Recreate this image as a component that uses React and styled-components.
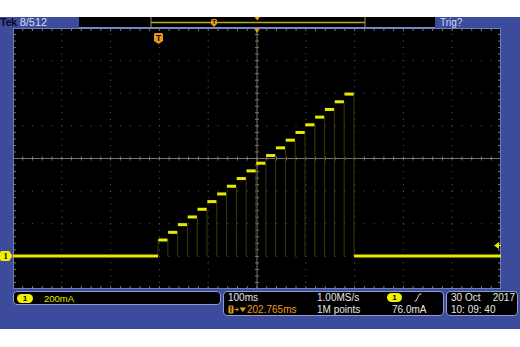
import styled, { createGlobalStyle } from "styled-components";

const GlobalStyle = createGlobalStyle`
  body {
    margin: 0;
    background: #ffffff;
    font-family: "Liberation Sans", Arial, sans-serif;
  }
`;

const BLUE = "#3c4b9c";
const YELLOW = "#e8e800";
const ORANGE = "#eb9a1e";

const Page = styled.div`
  width: 520px;
  height: 347px;
  padding-top: 17px;
  box-sizing: border-box;
`;

const Scope = styled.div`
  height: 312px;
  background: ${BLUE};
  display: flex;
  flex-direction: column;
`;

const TopBar = styled.div`
  display: flex;
  height: 11px;
  align-items: stretch;
`;

const TekLabel = styled.div`
  width: 79px;
  display: flex;
  align-items: center;
  gap: 3px;
  font-size: 11px;
  line-height: 11px;
  color: #d6dcf4;
`;

const TekBrand = styled.span`
  font-weight: bold;
  color: #0c0c24;
  letter-spacing: -0.5px;
`;

const RecordView = styled.div`
  flex: 1;
  background: #000;
  border-bottom: 1px solid #7f8cc2;
  box-sizing: border-box;
  display: flex;
`;

const TrigLabel = styled.div`
  width: 85px;
  padding-left: 5px;
  box-sizing: border-box;
  font-size: 10px;
  line-height: 11px;
  color: #d2d8f2;
`;

const Middle = styled.div`
  display: flex;
  height: 261px;
`;

const SideStrip = styled.div`
  width: ${(p) => p.$w}px;
  position: relative;
`;

const ChannelTag = styled.div`
  position: absolute;
  left: 0;
  top: ${(p) => p.$top}px;
  width: 13px;
  height: 10px;
  display: flex;
`;

const StatusRow = styled.div`
  display: flex;
  gap: 2px;
  padding: 2px 2px 0 13px;
  align-items: flex-start;
`;

const Panel = styled.div`
  background: #000;
  border: 1px solid #8d9bd0;
  border-radius: 4px;
  box-sizing: border-box;
  width: ${(p) => p.$w}px;
  height: ${(p) => p.$h}px;
  font-size: 10px;
  color: #e6e6e6;
`;

const ProbeRow = styled.div`
  display: flex;
  align-items: center;
  height: 100%;
  padding-left: 3px;
  gap: 11px;
  color: ${YELLOW};
  font-size: 9.5px;
`;

const Pill = styled.span`
  display: inline-flex;
  align-items: center;
  justify-content: center;
  width: ${(p) => p.$w || 15}px;
  height: 9px;
  border-radius: 5px;
  background: #f2f200;
  color: #000;
  font-size: 8px;
  font-weight: bold;
  line-height: 9px;
`;

const TimeGrid = styled.div`
  display: grid;
  grid-template-columns: 89px 70px 1fr;
  grid-template-rows: 11.5px 11.5px;
  align-items: center;
  padding-left: 4px;
  line-height: 11px;
`;

const Cell = styled.div`
  display: flex;
  align-items: center;
  gap: ${(p) => p.$gap || 0}px;
  padding-left: ${(p) => p.$pl || 0}px;
  color: ${(p) => p.$color || "#e6e6e6"};
  white-space: nowrap;
`;

const DateGrid = styled.div`
  display: flex;
  flex-direction: column;
  padding: 0 2px 0 4px;
  line-height: 11.5px;
`;

const DateLine = styled.div`
  display: flex;
  justify-content: space-between;
`;

function TMarker({ x, y, w = 9, h = 11 }) {
  return (
    <g transform={`translate(${x},${y})`}>
      <path
        d={`M1.5 0 H${w - 1.5} Q${w} 0 ${w} 1.5 V${h - 3} L${w / 2} ${h} L0 ${h - 3} V1.5 Q0 0 1.5 0 Z`}
        fill={ORANGE}
      />
      <text
        x={w / 2}
        y={h - 3}
        textAnchor="middle"
        fontSize={h - 2}
        fontWeight="bold"
        fontFamily="Liberation Sans, Arial, sans-serif"
        fill="#1a0f00"
      >
        T
      </text>
    </g>
  );
}

function RecordBar() {
  return (
    <svg width="356" height="10" style={{ display: "block" }}>
      <line x1="72" y1="0" x2="72" y2="10" stroke="#9a9070" strokeWidth="1" />
      <line x1="286" y1="0" x2="286" y2="10" stroke="#9a9070" strokeWidth="1" />
      <line x1="72" y1="5.5" x2="286" y2="5.5" stroke="#b4ac10" strokeWidth="1.6" />
      <TMarker x={132} y={2} w={6} h={8} />
      <path d="M175.5 0 H181 L178.25 3.5 Z" fill={ORANGE} />
    </svg>
  );
}

function Graticule() {
  const W = 488;
  const H = 261;
  const dx = W / 10;
  const dy = H / 8;
  const cx = W / 2;
  const cy = H / 2;
  const grid = [];

  for (let k = 1; k < 10; k++) {
    if (k === 5) continue;
    grid.push(
      <line
        key={`v${k}`}
        x1={k * dx}
        y1={0}
        x2={k * dx}
        y2={H}
        stroke="#5c5c5c"
        strokeWidth="1"
        strokeDasharray={`1 ${dy / 5 - 1}`}
        strokeDashoffset="0.5"
      />
    );
  }
  for (let k = 1; k < 8; k++) {
    if (k === 4) continue;
    grid.push(
      <line
        key={`h${k}`}
        x1={0}
        y1={k * dy}
        x2={W}
        y2={k * dy}
        stroke="#5c5c5c"
        strokeWidth="1"
        strokeDasharray={`1 ${dx / 5 - 1}`}
        strokeDashoffset="0.5"
      />
    );
  }

  const ticks = [];
  for (let j = 1; j < 50; j++) {
    const x = (j * dx) / 5;
    ticks.push(<line key={`tc${j}`} x1={x} y1={cy - 2} x2={x} y2={cy + 2} />);
    ticks.push(<line key={`tt${j}`} x1={x} y1={1} x2={x} y2={3} />);
    ticks.push(<line key={`tb${j}`} x1={x} y1={H - 3} x2={x} y2={H - 1} />);
  }
  for (let j = 1; j < 40; j++) {
    const y = (j * dy) / 5;
    ticks.push(<line key={`mc${j}`} x1={cx - 2} y1={y} x2={cx + 2} y2={y} />);
    ticks.push(<line key={`ml${j}`} x1={1} y1={y} x2={3} y2={y} />);
    ticks.push(<line key={`mr${j}`} x1={W - 3} y1={y} x2={W - 1} y2={y} />);
  }

  const base = 228;
  const steps = Array.from({ length: 20 }, (_, i) => ({ x: 145 + i * 9.8, y: 212 - i * 7.68 }));

  return (
    <svg width={W} height={H} style={{ display: "block", background: "#000" }}>
      {grid}
      <line x1={0} y1={cy} x2={W} y2={cy} stroke="#7a7564" strokeWidth="1" />
      <line x1={cx} y1={0} x2={cx} y2={H} stroke="#7a7564" strokeWidth="1" />
      <g stroke="#7e786a" strokeWidth="1">{ticks}</g>
      <rect x="0.5" y="0.5" width={W - 1} height={H - 1} fill="none" stroke="#6f7db8" strokeWidth="1" />

      {steps.map((s, i) => (
        <line
          key={`d${i}`}
          x1={s.x + 9.8}
          y1={s.y + 1}
          x2={s.x + 9.8}
          y2={base}
          stroke="#38380c"
          strokeWidth="1"
        />
      ))}
      <line x1={145} y1={212} x2={145} y2={base} stroke="#38380c" strokeWidth="1" />

      <rect x="0" y={base - 1.5} width="145" height="3" fill={YELLOW} />
      <rect x="341" y={base - 1.5} width={W - 341} height="3" fill={YELLOW} />
      {steps.map((s, i) => (
        <rect key={`s${i}`} x={s.x + 0.3} y={s.y - 1.5} width="9.2" height="3" fill={YELLOW} />
      ))}

      <TMarker x={141} y={5} w={9} h={11} />
      <path d={`M${cx - 3} 0.5 H${cx + 3} L${cx} 5 Z`} fill={ORANGE} />
      <path d="M481 217.5 L486 214 V221 Z M485 217 H488 V218 H485 Z" fill={YELLOW} />
    </svg>
  );
}

function SlopeIcon() {
  return (
    <svg width="8" height="9" style={{ display: "block" }}>
      <path d="M0.5 8 H2 L5.5 1 H7.5" fill="none" stroke="#e6e6e6" strokeWidth="0.9" />
    </svg>
  );
}

function ChannelMarker() {
  return (
    <svg width="13" height="10" style={{ display: "block" }}>
      <path d="M2 0 H9 L12.6 5 L9 10 H2 Q0 10 0 8 V2 Q0 0 2 0 Z" fill="#f0f000" />
      <text
        x="5.5"
        y="8.3"
        textAnchor="middle"
        fontSize="8.5"
        fontWeight="bold"
        fontFamily="Liberation Serif, serif"
        fill="#000"
      >
        1
      </text>
    </svg>
  );
}

function TimeRefIcon() {
  return (
    <svg width="19" height="9" style={{ display: "block" }}>
      <rect x="0.5" y="0.5" width="5" height="8" rx="1.2" fill={ORANGE} />
      <path d="M1.8 2 H4.2 M3 2 V7.5" stroke="#1a0f00" strokeWidth="1.1" />
      <path d="M6.5 4.5 H10 M8.6 3 L10.3 4.5 L8.6 6" stroke={ORANGE} strokeWidth="1" fill="none" />
      <path d="M11.5 2.5 H18 L14.75 7 Z" fill={ORANGE} />
    </svg>
  );
}

export default function App() {
  return (
    <Page>
      <GlobalStyle />
      <Scope>
        <TopBar>
          <TekLabel>
            <TekBrand>Tek</TekBrand>
            <span>8/512</span>
          </TekLabel>
          <RecordView>
            <RecordBar />
          </RecordView>
          <TrigLabel>Trig?</TrigLabel>
        </TopBar>

        <Middle>
          <SideStrip $w={13}>
            <ChannelTag $top={223}>
              <ChannelMarker />
            </ChannelTag>
          </SideStrip>
          <Graticule />
          <SideStrip $w={19} />
        </Middle>

        <StatusRow>
          <Panel $w={208} $h={14}>
            <ProbeRow>
              <Pill $w={16}>1</Pill>
              <span>200mA</span>
            </ProbeRow>
          </Panel>
          <Panel $w={221} $h={25}>
            <TimeGrid>
              <Cell>100ms</Cell>
              <Cell>1.00MS/s</Cell>
              <Cell $gap={12}>
                <Pill>1</Pill>
                <SlopeIcon />
              </Cell>
              <Cell $color={ORANGE}>
                <TimeRefIcon />
                202.765ms
              </Cell>
              <Cell>1M points</Cell>
              <Cell $pl={5}>76.0mA</Cell>
            </TimeGrid>
          </Panel>
          <Panel $w={72} $h={25}>
            <DateGrid>
              <DateLine>
                <span>30 Oct</span>
                <span>2017</span>
              </DateLine>
              <DateLine>
                <span>10: 09: 40</span>
              </DateLine>
            </DateGrid>
          </Panel>
        </StatusRow>
      </Scope>
    </Page>
  );
}
